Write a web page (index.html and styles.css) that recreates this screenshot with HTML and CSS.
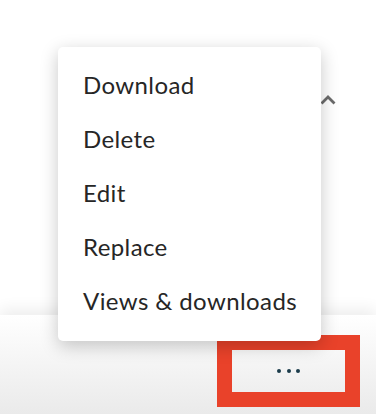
FILE: index.html
```html
<!DOCTYPE html>
<html lang="en">
<head>
  <meta charset="UTF-8" />
  <title>File actions</title>
  <link rel="stylesheet" href="styles.css">
</head>
<body>

  <div class="content">
    <button class="collapse" aria-label="Collapse">
      <svg width="16" height="10" viewBox="0 0 16 10"><path d="M1.5 8.5 L8 2 L14.5 8.5" fill="none" stroke="#6b6b6b" stroke-width="2.8"/></svg>
    </button>
  </div>

  <div class="footer">
    <button class="more-btn" aria-label="More actions">
      <span class="dot"></span><span class="dot"></span><span class="dot"></span>
    </button>
  </div>

  <ul class="menu">
    <li class="menu-item">Download</li>
    <li class="menu-item">Delete</li>
    <li class="menu-item">Edit</li>
    <li class="menu-item">Replace</li>
    <li class="menu-item">Views &amp; downloads</li>
  </ul>

</body>
</html>
```

FILE: styles.css
```css
* {
  margin: 0; padding: 0; box-sizing: border-box;
  font-family: 'Lato', 'Noto Sans', sans-serif;
}
html, body {
  width: 100%; height: 100%;
  background: #fff;
  overflow: hidden;
}
body { display: flex; flex-direction: column; }

.content {
  height: 315px;
  display: flex; justify-content: flex-end; align-items: flex-start;
  padding: 95px 40px 0 0;
}

.collapse {
  background: none; border: none;
  width: 16px; height: 10px;
  display: flex;
}

.footer {
  flex: 1;
  display: flex; justify-content: flex-end; align-items: flex-start;
  padding: 35px 31px 0 0;
  background: linear-gradient(#fff, #eaeaea);
  box-shadow: 0 -6px 14px rgba(0,0,0,0.07);
  position: relative;
}

.more-btn {
  width: 113px; height: 42px;
  background: transparent; border: none;
  display: flex; justify-content: center; align-items: center; gap: 5.5px;
  outline: 15px solid #e9422a; /* highlight frame */
}

.dot {
  width: 4px; height: 4px; border-radius: 50%;
  background: #1b3c4b;
}

.menu {
  position: absolute; left: 58px; top: 47px;
  width: 263px;
  list-style: none;
  background: #fff;
  border-radius: 5px;
  padding: 11px 0 13px 25px;
  box-shadow: 0 5px 18px rgba(0,0,0,0.22);
  z-index: 2;
}

.menu-item {
  font-size: 24px; line-height: 54px;
  letter-spacing: 0.4px;
  color: #262626;
  white-space: nowrap;
}
```
